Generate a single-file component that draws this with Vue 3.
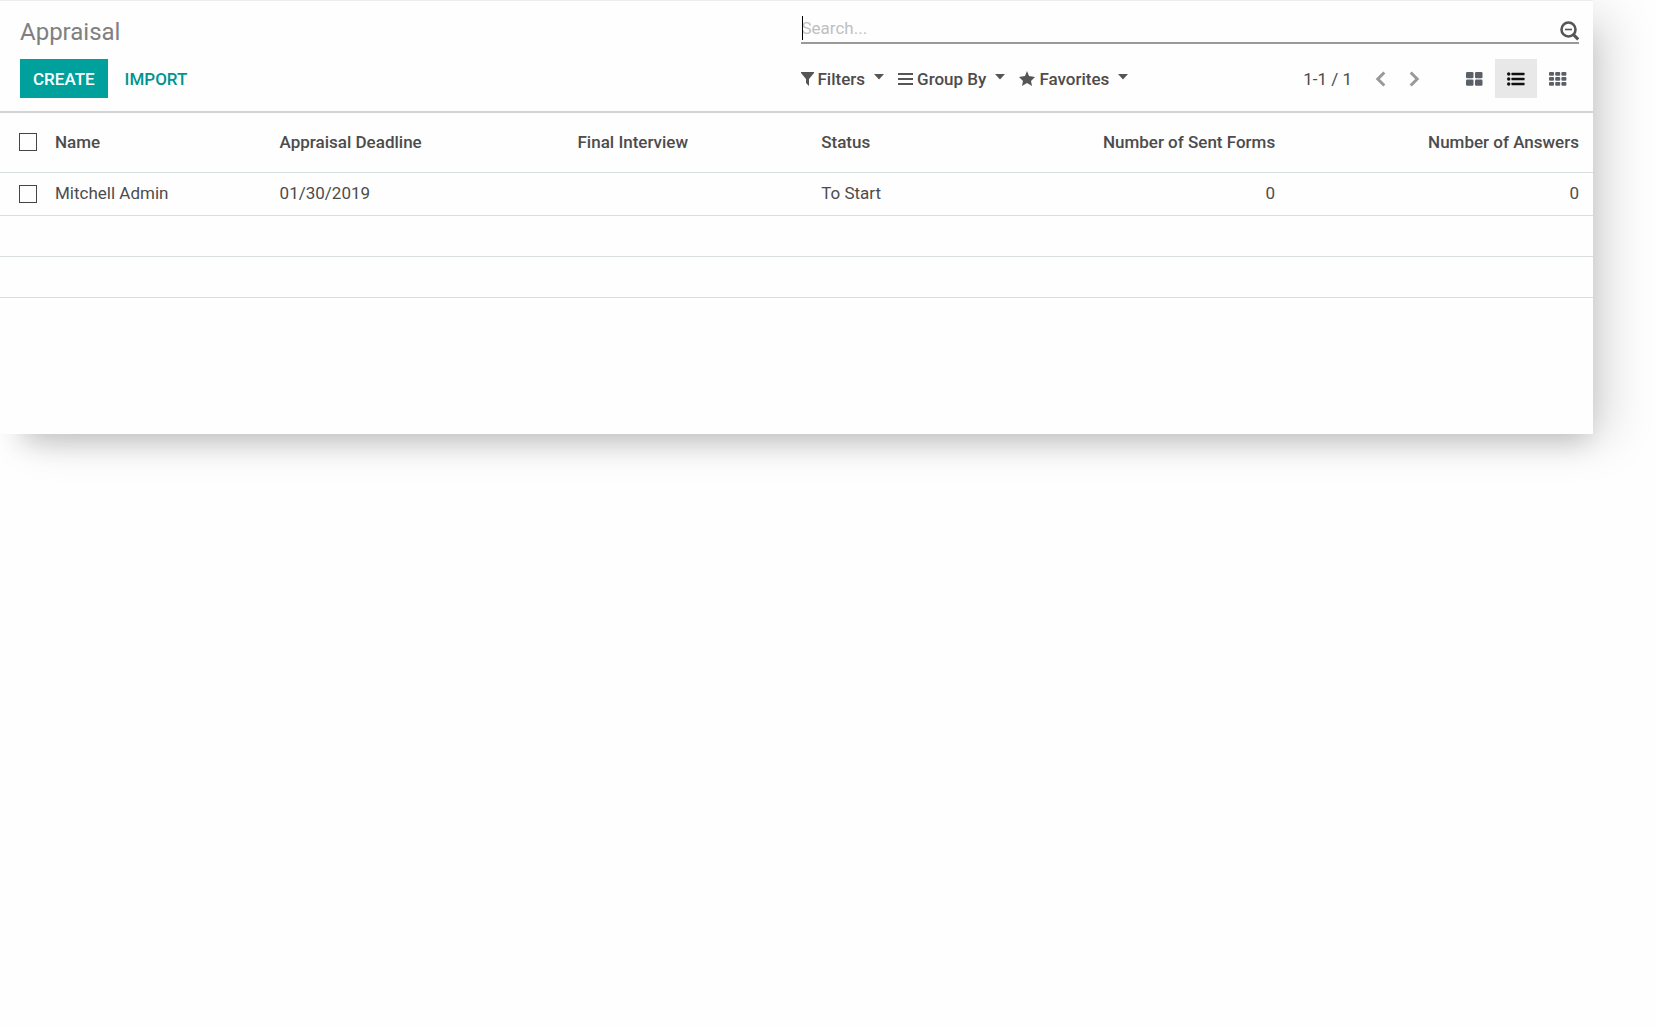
<script setup>
import { ref } from 'vue'

const query = ref('')
const view = ref('list')
const columns = [
  { key: 'name', label: 'Name' },
  { key: 'deadline', label: 'Appraisal Deadline' },
  { key: 'interview', label: 'Final Interview' },
  { key: 'status', label: 'Status' },
  { key: 'sent', label: 'Number of Sent Forms', numeric: true },
  { key: 'answers', label: 'Number of Answers', numeric: true },
]
const rows = [
  { name: 'Mitchell Admin', deadline: '01/30/2019', interview: '', status: 'To Start', sent: 0, answers: 0 },
]
const menus = [
  { label: 'Filters', icon: 'M0 1h13v1L8 8v7l-3-3V8L0 2z', width: 13 },
  { label: 'Group By', icon: 'M0 2h15v2H0zM0 7h15v2H0zM0 12h15v2H0z', width: 15 },
  { label: 'Favorites', icon: 'M8 0l2 5 6 1-4 4 1 5-5-3-5 3 1-5-4-4 6-1z', width: 16 },
]
</script>

<template>
  <div class="page">
    <main class="panel">
      <header class="control">
        <h1>Appraisal</h1>
        <div class="search">
          <span class="caret" aria-hidden="true"></span>
          <input v-model="query" type="text" placeholder="Search..." aria-label="Search" />
          <button class="icon-button" type="button" aria-label="Search options">
            <svg width="20" height="20" viewBox="0 0 20 20" fill="none" stroke="#555">
              <circle cx="9.500" cy="8.500" r="7" stroke-width="2.600" />
              <path d="M6 8.500h7" stroke-width="1.600" />
              <path d="M14.200 13.400l5 5" stroke-width="3" />
            </svg>
          </button>
        </div>
        <div class="actions">
          <button class="create" type="button">CREATE</button>
          <button class="import" type="button">IMPORT</button>
        </div>
        <div class="tools">
          <div class="menus">
            <button v-for="m in menus" :key="m.label" class="menu" type="button">
              <svg :width="m.width" height="15" :viewBox="`0 0 ${m.width} 15`" fill="#555"><path :d="m.icon" /></svg>
              <span>{{ m.label }}</span>
              <svg class="arrow" width="10" height="6" viewBox="0 0 10 6" fill="#555"><path d="M0 0h10L5 5.5z" /></svg>
            </button>
          </div>
          <nav class="pager" aria-label="Pager">
            <span>1-1 / 1</span>
            <button class="icon-button" type="button" aria-label="Previous">
              <svg width="11" height="16" viewBox="0 0 11 16" fill="none" stroke="#999" stroke-width="3"><path d="M9.300 1.500L2.800 8l6.500 6.500" /></svg>
            </button>
            <button class="icon-button" type="button" aria-label="Next">
              <svg width="11" height="16" viewBox="0 0 11 16" fill="none" stroke="#999" stroke-width="3"><path d="M1.700 1.500L8.200 8l-6.500 6.500" /></svg>
            </button>
          </nav>
          <div class="views">
            <button type="button" :class="{ active: view === 'kanban' }" aria-label="Kanban view" @click="view = 'kanban'">
              <svg width="17" height="14" viewBox="0 0 17 14" fill="#5b6068">
                <rect v-for="i in 4" :key="i" :x="((i - 1) % 2) * 9" :y="i > 2 ? 7.5 : 0" width="7.500" height="6.200" rx="1.300" />
              </svg>
            </button>
            <button type="button" :class="{ active: view === 'list' }" aria-label="List view" @click="view = 'list'">
              <svg width="18" height="14" viewBox="0 0 18 14" fill="#111">
                <template v-for="i in 3" :key="i">
                  <circle cx="1.700" :cy="i * 5 - 3" r="1.700" />
                  <rect x="4.500" :y="i * 5 - 4.2" width="13" height="2.400" rx="0.500" />
                </template>
              </svg>
            </button>
            <button type="button" :class="{ active: view === 'pivot' }" aria-label="Pivot view" @click="view = 'pivot'">
              <svg width="18" height="14" viewBox="0 0 18 14" fill="#5b6068">
                <rect v-for="i in 9" :key="i" :x="((i - 1) % 3) * 6.2" :y="Math.floor((i - 1) / 3) * 5" width="5" height="3.800" rx="1" />
              </svg>
            </button>
          </div>
        </div>
      </header>

      <table>
        <colgroup>
          <col class="c-check" />
          <col v-for="c in columns" :key="c.key" :class="`c-${c.key}`" />
        </colgroup>
        <thead>
          <tr>
            <th class="check"><input type="checkbox" aria-label="Select all" /></th>
            <th v-for="c in columns" :key="c.key" scope="col" :class="{ numeric: c.numeric }">{{ c.label }}</th>
          </tr>
        </thead>
        <tbody>
          <tr v-for="r in rows" :key="r.name">
            <td class="check"><input type="checkbox" :aria-label="`Select ${r.name}`" /></td>
            <td v-for="c in columns" :key="c.key" :class="{ numeric: c.numeric }">{{ r[c.key] }}</td>
          </tr>
          <tr v-for="n in 2" :key="n" class="blank"><td colspan="7"></td></tr>
        </tbody>
      </table>
    </main>
  </div>
</template>

<style>
body {
  background: #fefefe;
}
</style>

<style scoped>
.page {
  box-sizing: border-box;
  min-height: 100vh;
  padding-right: 63px;
  overflow: hidden;
}
.panel {
  box-sizing: border-box;
  padding-bottom: 136px;
  border-top: 1px solid #eee;
  background: #fefefe;
  box-shadow:
    8px 22px 24px -14px rgba(0, 0, 0, 0.16),
    22px 10px 44px -6px rgba(0, 0, 0, 0.15);
  color: #4c4c4c;
  font: 17px/24px Roboto, sans-serif;
}
button,
input {
  margin: 0;
  padding: 0;
  border: 0;
  background: none;
  color: inherit;
  font: inherit;
}
button {
  cursor: pointer;
}
svg {
  display: block;
}
.control {
  display: grid;
  grid-template-columns: 1fr 1fr;
  column-gap: 2px;
  padding: 15px 14px 13px 20px;
  border-bottom: 2px solid #d4d4d4;
}
h1 {
  margin: 0;
  color: #808080;
  font-size: 24px;
  font-weight: 400;
  line-height: 32px;
}
.search {
  position: relative;
  display: flex;
  align-items: flex-start;
  height: 26px;
  margin-bottom: 15px;
  border-bottom: 2px solid #999;
}
.search input {
  flex: 1;
  height: 24px;
  padding-left: 1px;
  outline: 0;
}
.search input::placeholder {
  color: #c0c0c0;
  opacity: 1;
}
.search .icon-button {
  margin-top: 5px;
}
.caret {
  position: absolute;
  left: 1px;
  top: 0;
  width: 1px;
  height: 24px;
  background: #000;
}
.actions,
.menus,
.pager,
.tools,
.views {
  display: flex;
  align-items: center;
}
.actions button {
  height: 39px;
  font-weight: 500;
}
.actions .create {
  padding: 0 13px;
  background: #00a09d;
  color: #fff;
}
.actions .import {
  padding: 0 17px;
  color: #00948f;
}
.menus {
  flex: 1;
  gap: 14px;
}
.menu {
  display: flex;
  align-items: center;
  gap: 4px;
  font-weight: 500;
}
.arrow {
  margin: 0 0 3px 5px;
}
.pager {
  gap: 23px;
  margin-right: 33px;
}
.views button {
  display: grid;
  place-items: center;
  width: 42px;
  height: 39px;
}
.views .active {
  background: #e8e8e8;
}
table {
  width: 100%;
  border-collapse: collapse;
  table-layout: fixed;
}
.c-check {
  width: 47px;
}
.c-name {
  width: 14.1%;
}
.c-deadline {
  width: 18.7%;
}
.c-interview {
  width: 15.3%;
}
.c-status {
  width: 15%;
}
.c-sent {
  width: 14.5%;
}
th,
td {
  padding: 0 8px 2px;
  border-bottom: 1px solid #d9dee1;
  text-align: left;
  white-space: nowrap;
}
th {
  height: 57px;
  font-weight: 500;
}
td {
  box-sizing: border-box;
  height: 43px;
}
.blank td {
  height: 41px;
}
.numeric {
  text-align: right;
}
.numeric:last-child {
  padding-right: 14px;
}
.check {
  padding: 0 0 0 19px;
}
th.check {
  padding-bottom: 2px;
}
.check input {
  display: block;
  appearance: none;
  width: 18px;
  height: 18px;
  border: 1px solid #444;
}
.check input:checked {
  background: #00a09d;
}
</style>
